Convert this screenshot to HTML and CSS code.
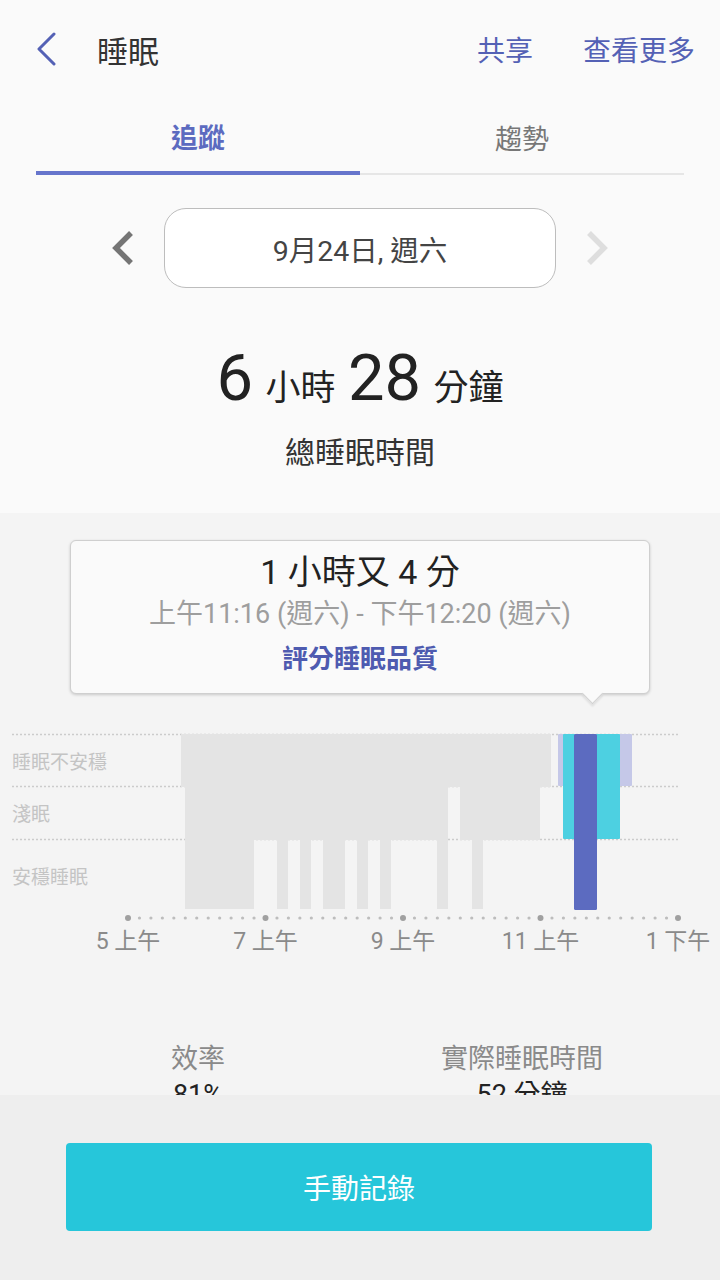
FILE: index.html
```html
<!DOCTYPE html>
<html lang="zh-Hant">
<head>
  <meta charset="UTF-8">
  <meta name="viewport" content="width=device-width, initial-scale=1.0">
  <title>睡眠</title>
  <link rel="stylesheet" href="styles.css">
</head>
<body>
  <header class="topbar">
    <svg class="back" width="24" height="34" viewBox="0 0 24 34"><path d="M19 2 L4 17 L19 32" fill="none" stroke="#5461b5" stroke-width="3" stroke-linecap="round" stroke-linejoin="round"/></svg>
    <h1 class="title">睡眠</h1>
    <nav class="actions">
      <span>共享</span>
      <span>查看更多</span>
    </nav>
  </header>

  <div class="tabs">
    <div class="tab active">追蹤</div>
    <div class="tab">趨勢</div>
  </div>

  <div class="date-row">
    <svg class="chev" width="24" height="36" viewBox="0 0 24 36"><path d="M20 3 L5 18 L20 33" fill="none" stroke="#757575" stroke-width="5.5"/></svg>
    <div class="date-box">9月24日, 週六</div>
    <svg class="chev" width="24" height="36" viewBox="0 0 24 36"><path d="M4 3 L19 18 L4 33" fill="none" stroke="#dedede" stroke-width="5.5"/></svg>
  </div>

  <div class="total">
    <span class="num">6</span> <span class="unit">小時</span> <span class="num">28</span> <span class="unit">分鐘</span>
  </div>
  <div class="total-label">總睡眠時間</div>

  <section class="chart-area">
    <div class="tooltip">
      <div class="tip-dur">1 小時又 4 分</div>
      <div class="tip-range">上午11:16 (週六) - 下午12:20 (週六)</div>
      <div class="tip-link">評分睡眠品質</div>
    </div>

    <svg class="chart" width="720" height="256" viewBox="0 704 720 256">
      <g stroke="#cccccc" stroke-width="1.5" stroke-dasharray="2 2">
        <line x1="12" y1="734.5" x2="678" y2="734.5"/>
        <line x1="12" y1="786.5" x2="678" y2="786.5"/>
        <line x1="12" y1="839.5" x2="678" y2="839.5"/>
      </g>
      <g class="ylabels">
        <text x="12" y="769">睡眠不安穩</text>
        <text x="12" y="821">淺眠</text>
        <text x="12" y="884">安穩睡眠</text>
      </g>
      <g fill="#e4e4e4">
        <rect x="181" y="734" width="370" height="53"/>
        <rect x="185" y="786" width="263" height="54"/>
        <rect x="460" y="786" width="80" height="54"/>
        <rect x="185" y="839" width="69" height="70"/>
        <rect x="277" y="839" width="11" height="70"/>
        <rect x="300" y="839" width="11" height="70"/>
        <rect x="323" y="839" width="22" height="70"/>
        <rect x="357" y="839" width="11" height="70"/>
        <rect x="380" y="839" width="11" height="70"/>
        <rect x="437" y="839" width="11" height="70"/>
        <rect x="472" y="839" width="11" height="70"/>
      </g>
      <rect x="558" y="734" width="74" height="52" fill="#c5c8e8" rx="1"/>
      <rect x="563" y="734" width="57" height="105" fill="#4dd0e1" rx="1"/>
      <rect x="574" y="734" width="23" height="176" fill="#5c6bc0" rx="1.5"/>
      <g id="ticks"></g>
      <g class="xlabels">
        <text x="128" y="949">5 上午</text>
        <text x="265.5" y="949">7 上午</text>
        <text x="403" y="949">9 上午</text>
        <text x="540.5" y="949">11 上午</text>
        <text x="678" y="949">1 下午</text>
      </g>
    </svg>

    <div class="stats">
      <div class="stat">
        <div class="stat-label">效率</div>
        <div class="stat-value">81%</div>
      </div>
      <div class="stat">
        <div class="stat-label">實際睡眠時間</div>
        <div class="stat-value">52 分鐘</div>
      </div>
    </div>
  </section>

  <footer class="bottom-bar">
    <button class="manual">手動記錄</button>
  </footer>

  <script>
    // axis dots: one every 10 minutes from 5 AM to 1 PM
    var ticks = document.getElementById('ticks');
    var ns = 'http://www.w3.org/2000/svg';
    for (var i = 0; i <= 48; i++) {
      var c = document.createElementNS(ns, 'circle');
      var major = i % 12 === 0;
      c.setAttribute('cx', 128 + i * 550 / 48);
      c.setAttribute('cy', 918);
      c.setAttribute('r', major ? 3 : 1.6);
      c.setAttribute('fill', major ? '#a0a0a0' : '#bdbdbd');
      ticks.appendChild(c);
    }
  </script>
</body>
</html>
```

FILE: styles.css
```css
body { margin: 0; height: 1280px; overflow: hidden; background: #fafafa; color: #333; font-family: Roboto, "Noto Sans CJK TC", sans-serif; }

.topbar { display: flex; align-items: center; height: 98px; padding: 0 25px 0 35px; }
.back { display: block; }
.title { margin: 0 0 0 38px; font-size: 31px; font-weight: normal; color: #333; flex: 1; }
.actions { display: flex; gap: 50px; font-size: 28px; color: #5461b5; }

.tabs { display: flex; align-items: flex-end; margin: 0 36px; }
.tab { flex: 1; height: 77px; box-sizing: border-box; display: flex; align-items: center; justify-content: center; padding-top: 4px; font-size: 27px; color: #777; border-bottom: 2px solid #e6e6e6; }
.tab.active { color: #5c6bc0; font-weight: bold; border-bottom: 4px solid #6675cc; }

.date-row { display: flex; align-items: center; justify-content: center; gap: 29px; margin-top: 33px; }
.chev { display: block; }
.date-box { width: 392px; height: 80px; box-sizing: border-box; border: 1px solid #bdbdbd; border-radius: 22px; background: #fff; display: flex; align-items: center; justify-content: center; font-size: 28.5px; color: #444; }

.total { margin-top: 50px; height: 80px; line-height: 80px; text-align: center; color: #222; font-size: 50px; }
.total .num { font-size: 65px; }
.total .unit { font-size: 35px; }
.total-label { margin-top: 15px; line-height: 40px; text-align: center; font-size: 30px; color: #333; }

.chart-area { box-sizing: border-box; height: 767px; margin-top: 40px; background: #f4f4f4; padding-top: 27px; }
.tooltip { position: relative; margin: 0 70px; padding: 9px 0; background: #fafafa; border: 1px solid #cfcfcf; border-radius: 6px; box-shadow: 0 1px 3px rgba(0, 0, 0, 0.18); text-align: center; }
.tooltip::after { content: ""; position: absolute; left: 514px; bottom: -8px; width: 14px; height: 14px; background: #fafafa; border-right: 1px solid #cfcfcf; border-bottom: 1px solid #cfcfcf; transform: rotate(45deg); box-shadow: 2px 2px 2px rgba(0, 0, 0, 0.08); }
.tip-dur { line-height: 44px; font-size: 34px; color: #222; }
.tip-range { line-height: 40px; font-size: 27px; color: #9e9e9e; }
.tip-link { line-height: 50px; font-size: 26px; font-weight: bold; color: #4e5bb0; }

.chart { display: block; margin-top: 10px; }
.ylabels text { font-size: 19px; fill: #c4c4c4; }
.xlabels text { font-size: 23px; fill: #8a8a8a; text-anchor: middle; }

.stats { display: flex; margin: 81px 36px 0; }
.stat { flex: 1; text-align: center; }
.stat-label { line-height: 36px; font-size: 27px; color: #8a8a8a; }
.stat-value { line-height: 36px; font-size: 27px; color: #222; }

.bottom-bar { position: fixed; left: 0; right: 0; bottom: 0; height: 185px; background: #eeeeee; }
.manual { display: block; width: 586px; height: 88px; margin: 48px 0 0 66px; border: none; border-radius: 4px; background: #26c6da; color: #fff; font-family: inherit; font-size: 28px; }
```
